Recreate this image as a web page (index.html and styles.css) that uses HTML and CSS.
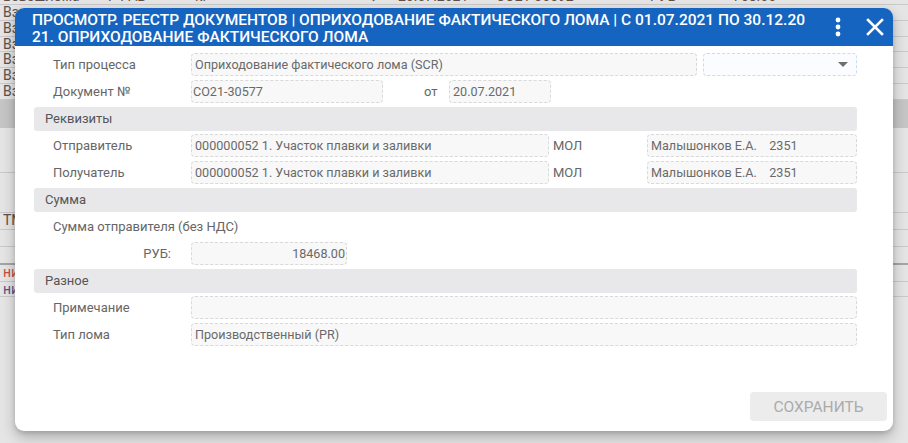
FILE: index.html
```html
<!DOCTYPE html>
<html lang="ru">
<head>
<meta charset="utf-8">
<title>Просмотр</title>
<link rel="stylesheet" href="styles.css">
</head>
<body>
<div class="page">
  <div class="bg-table">
    <div class="bg-row bg-top">
      <span class="c1">Взвешлома</span><span class="c2">Р РАБ</span><span class="c3">кг</span><span class="c4">↓</span><span class="c5">20.07.2021</span><span class="c6">СО21-30592</span><span class="c7">РУБ</span><span class="c8">768.00</span>
    </div>
    <div class="bg-row"><span class="c1">Вз</span></div>
    <div class="bg-row"><span class="c1">Вз</span></div>
    <div class="bg-row"><span class="c1">Вз</span></div>
    <div class="bg-row"><span class="c1">Вз</span></div>
    <div class="bg-row"><span class="c1">Вз</span></div>
    <div class="bg-row"><span class="c1">Вз</span></div>
    <div class="bg-band"></div>
    <div class="bg-row h45"></div>
    <div class="bg-row h40"></div>
    <div class="bg-row h17"><span class="c1">ТМ</span></div>
    <div class="bg-row h17"></div>
    <div class="bg-row h18 dark"></div>
    <div class="bg-row h17"><span class="c1 red">ние</span></div>
    <div class="bg-row h15"><span class="c1 violet">ни</span></div>
  </div>
  <div class="overlay"></div>

  <div class="dialog">
    <div class="dlg-head">
      <div class="dlg-title">Просмотр. Реестр документов | Оприходование фактического лома | с 01.07.2021 по 30.12.2021. Оприходование фактического лома</div>
      <div class="dlg-tools">
        <svg class="ico-dots" width="8" height="20" viewBox="0 0 8 20"><circle cx="4" cy="3" r="2.4" fill="#fff"/><circle cx="4" cy="10" r="2.4" fill="#fff"/><circle cx="4" cy="17" r="2.4" fill="#fff"/></svg>
        <svg class="ico-close" width="18" height="18" viewBox="0 0 18 18"><path d="M2 2 L16 16 M16 2 L2 16" stroke="#fff" stroke-width="2.6" stroke-linecap="square"/></svg>
      </div>
    </div>

    <div class="dlg-body">
      <div class="row">
        <div class="lbl">Тип процесса</div>
        <div class="fld w506">Оприходование фактического лома (SCR)</div>
        <div class="fld sel w154"><span class="arrow"></span></div>
      </div>
      <div class="row">
        <div class="lbl">Документ №</div>
        <div class="fld w192 tight">СО21-30577</div>
        <div class="mid-lbl ot">от</div>
        <div class="fld w102">20.07.2021</div>
      </div>

      <div class="section">Реквизиты</div>
      <div class="row">
        <div class="lbl">Отправитель</div>
        <div class="fld w358">000000052 1. Участок плавки и заливки</div>
        <div class="mid-lbl mol">МОЛ</div>
        <div class="fld w210">Малышонков Е.А.&nbsp;&nbsp;&nbsp; 2351</div>
      </div>
      <div class="row">
        <div class="lbl">Получатель</div>
        <div class="fld w358">000000052 1. Участок плавки и заливки</div>
        <div class="mid-lbl mol">МОЛ</div>
        <div class="fld w210">Малышонков Е.А.&nbsp;&nbsp;&nbsp; 2351</div>
      </div>

      <div class="section">Сумма</div>
      <div class="row">
        <div class="lbl wide">Сумма отправителя (без НДС)</div>
      </div>
      <div class="row">
        <div class="lbl right">РУБ:</div>
        <div class="fld w156 num">18468.00</div>
      </div>

      <div class="section">Разное</div>
      <div class="row">
        <div class="lbl">Примечание</div>
        <div class="fld grow"></div>
      </div>
      <div class="row">
        <div class="lbl">Тип лома</div>
        <div class="fld grow">Производственный (PR)</div>
      </div>
    </div>

    <div class="dlg-foot">
      <button class="btn-save" disabled>Сохранить</button>
    </div>
  </div>
</div>
</body>
</html>
```

FILE: styles.css
```css
* { box-sizing: border-box; }
html, body { margin: 0; padding: 0; }
body {
  width: 908px;
  height: 443px;
  overflow: hidden;
  font-family: Roboto, "Noto Sans", Arial, sans-serif;
  background: #ffffff;
}
.page {
  position: relative;
  width: 908px;
  height: 443px;
  overflow: hidden;
}

/* background table */
.bg-table {
  margin-top: -11px;
  font-size: 14px;
  color: #6b5a52;
}
.bg-row {
  position: relative;
  height: 15.8px;
  border-bottom: 1px solid #e0e0e0;
  white-space: nowrap;
  line-height: 15px;
}
.bg-top { height: 16px; }
.bg-row span { position: absolute; top: 0; }
.bg-row .c1 { left: 3px; }
.bg-row .c2 { left: 108px; }
.bg-row .c3 { left: 195px; }
.bg-row .c4 { left: 370px; }
.bg-row .c5 { left: 398px; }
.bg-row .c6 { left: 496px; }
.bg-row .c7 { left: 650px; }
.bg-row .c8 { left: 733px; }
.bg-row.h45 { height: 45px; }
.bg-row.h40 { height: 40px; }
.bg-row.h17 { height: 17px; }
.bg-row.h18 { height: 18px; }
.bg-row.h15 { height: 15px; }
.bg-row.dark { border-bottom: 2px solid #b8b8b8; }
.bg-band { height: 28px; background: #dcdcdc; }
.red { color: #e0564a; }
.violet { color: #6a5a9a; }

.overlay {
  position: absolute;
  inset: 0;
  background: rgba(0, 0, 0, 0.1);
}

/* dialog */
.dialog {
  position: absolute;
  left: 15px;
  top: 8px;
  width: 878px;
  height: 423px;
  background: #fff;
  border-radius: 9px;
  box-shadow: 0 6px 14px rgba(0, 0, 0, 0.25), 0 2px 4px rgba(0,0,0,0.12);
  display: flex;
  flex-direction: column;
  overflow: hidden;
}
.dlg-head {
  height: 38px;
  background: #1565c0;
  display: flex;
  align-items: flex-start;
  padding: 4px 0 0 17px;
  flex: none;
}
.dlg-title {
  width: 779px;
  flex: none;
  color: #fff;
  font-weight: 500;
  font-size: 15.5px;
  line-height: 17px;
  text-transform: uppercase;
  word-break: break-all;
  letter-spacing: 0;
}
.dlg-tools {
  margin-left: auto;
  display: flex;
  align-items: center;
  gap: 24px;
  padding: 5px 9px 0 0;
}
.ico-dots { display: block; }
.ico-close { display: block; }

.dlg-body {
  padding: 5px 36px 0 19px;
  font-size: 13px;
  color: #666;
}
.row {
  display: flex;
  align-items: center;
  height: 27px;
}
.lbl {
  width: 157px;
  flex: none;
  padding-left: 19px;
  color: #666;
}
.lbl.wide { width: auto; }
.lbl.right { text-align: right; padding-right: 20px; }
.fld {
  height: 23px;
  flex: none;
  border: 1px dashed #d9d9d9;
  border-radius: 4px;
  background: #f8f8f8;
  color: #6a6a6a;
  font-size: 12.6px;
  line-height: 21px;
  padding: 0 3px;
  white-space: nowrap;
  overflow: hidden;
}
.fld.tight { padding-left: 1px; }
.fld.num { text-align: right; padding-right: 1px; }
.fld.grow { flex: 1; }
.w506 { width: 506px; }
.w154 { width: 154px; }
.w192 { width: 192px; }
.w102 { width: 102px; }
.w358 { width: 358px; }
.w210 { width: 210px; }
.w156 { width: 156px; }
.sel {
  margin-left: 6px;
  border-color: #c8dcf2;
  background: #fafcff;
  position: relative;
}
.arrow {
  position: absolute;
  right: 8px;
  top: 8px;
  width: 0;
  height: 0;
  border-left: 5px solid transparent;
  border-right: 5px solid transparent;
  border-top: 5px solid #6f6f6f;
}
.mid-lbl { flex: none; color: #666; }
.ot { width: 66px; padding-left: 41px; }
.mol { width: 98px; padding-left: 4px; }

.section {
  height: 24px;
  margin: 2px 0 1px;
  background: #e8e8ea;
  border-radius: 3px;
  color: #555;
  line-height: 24px;
  padding-left: 11px;
}

.dlg-foot {
  margin-top: auto;
  display: flex;
  justify-content: flex-end;
  padding: 0 6px 10px 0;
}
.btn-save {
  width: 137px;
  height: 29px;
  border: none;
  border-radius: 4px;
  background: #ececec;
  color: #ababab;
  font-family: Roboto, Arial, sans-serif;
  font-size: 15.5px;
  font-weight: 400;
  text-transform: uppercase;
  padding: 0;
}
```
